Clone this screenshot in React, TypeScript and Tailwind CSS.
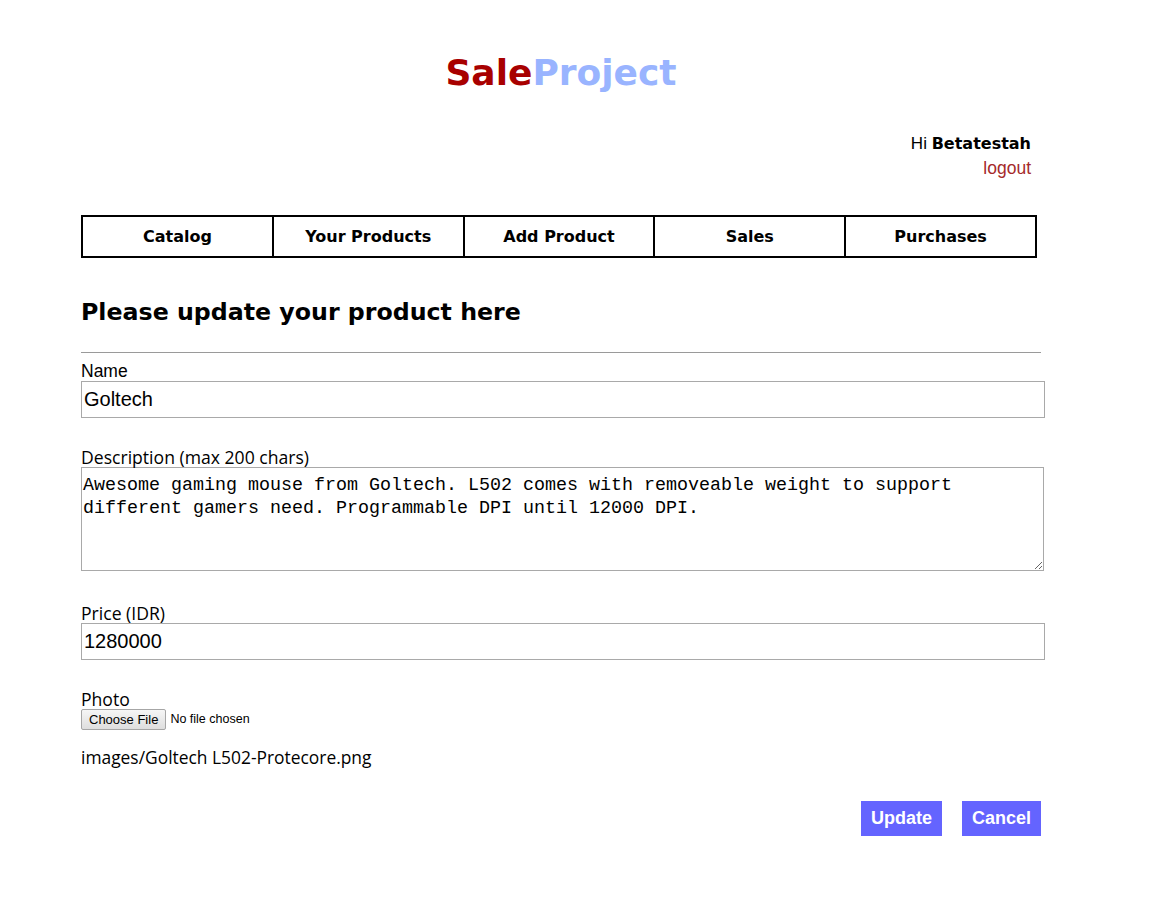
import React from 'react';

const navItems = ['Catalog', 'Your Products', 'Add Product', 'Sales', 'Purchases'];

const verdana = "font-['DejaVu_Sans',Verdana,sans-serif]";
const arial = "font-['Liberation_Sans',Arial,sans-serif]";
const segoe = "font-['Open_Sans','Segoe_UI',sans-serif]";

export default function App() {
  return (
    <div className="min-h-[897px] w-full bg-white text-black">
      <div className="ml-[81px] w-[960px]">
        {/* Title */}
        <h1 className={`${verdana} pt-[52px] text-center text-[36px] font-bold leading-[42px]`}>
          <span className="text-[#a80000]">Sale</span>
          <span className="text-[#99b4ff]">Project</span>
        </h1>

        {/* User box */}
        <div className="mt-[37px] mr-[10px] flex flex-col items-end text-[16px] leading-[24px]">
          <p>
            <span className={`${arial} text-[17px]`}>Hi </span>
            <span className={`${verdana} font-bold`}>Betatestah</span>
          </p>
          <a className={`${arial} text-[17.5px] text-[#a52a2a]`} href="#">
            logout
          </a>
        </div>

        {/* Nav */}
        <nav className="mt-[35px] flex w-[956px] border-2 border-black">
          {navItems.map((item, i) => (
            <div
              key={item}
              className={`${verdana} flex h-[39px] flex-1 items-center justify-center text-[16px] font-bold ${
                i > 0 ? 'border-l-2 border-black' : ''
              }`}
            >
              {item}
            </div>
          ))}
        </nav>

        {/* Heading */}
        <h2 className={`${verdana} mt-[37px] text-[23.7px] font-bold leading-[34px]`}>Please update your product here</h2>
        <hr className="mt-[23px] border-t border-[#9a9a9a]" />

        {/* Form */}
        <form className="mt-[9px]">
          <label className={`${arial} block text-[17.5px] leading-[19px]`}>Name</label>
          <input
            className={`${arial} block h-[37px] w-[964px] border border-[#a9a9a9] px-[2px] text-[20px] outline-none`}
            defaultValue="Goltech"
          />

          <label className={`${segoe} mt-[30px] block text-[17.6px] leading-[19px]`}>Description (max 200 chars)</label>
          <textarea
            className="block h-[104px] w-[963px] resize-y border border-[#a9a9a9] px-[1px] pt-[6px] pb-[4px] font-['Liberation_Mono','DejaVu_Sans_Mono',monospace] text-[18.33px] leading-[23px] outline-none"
            defaultValue="Awesome gaming mouse from Goltech. L502 comes with removeable weight to support different gamers need. Programmable DPI until 12000 DPI."
          />

          <label className={`${segoe} mt-[33px] block text-[17.6px] leading-[19px]`}>Price (IDR)</label>
          <input
            className={`${arial} block h-[37px] w-[964px] border border-[#a9a9a9] px-[2px] text-[20px] outline-none`}
            defaultValue="1280000"
          />

          <label className={`${segoe} mt-[30px] block text-[17.6px] leading-[19px]`}>Photo</label>
          <div className={`${arial} flex items-center text-[13px]`}>
            <span className="flex h-[21px] items-center rounded-[2px] border border-[#a6a6a6] bg-gradient-to-b from-[#f6f6f6] to-[#dedede] px-[7px] text-[13px]">
              Choose File
            </span>
            <span className="ml-[4px] text-[12.5px]">No file chosen</span>
          </div>

          <p className={`${segoe} mt-[16px] text-[17.4px] leading-[22px]`}>images/Goltech L502-Protecore.png</p>

          <div className="mt-[33px] flex justify-end gap-[20px]">
            <button
              type="button"
              className={`${arial} h-[35px] w-[81px] bg-[#6464ff] text-[18px] font-bold text-white`}
            >
              Update
            </button>
            <button
              type="button"
              className={`${arial} h-[35px] w-[79px] bg-[#6464ff] text-[18px] font-bold text-white`}
            >
              Cancel
            </button>
          </div>
        </form>
      </div>
    </div>
  );
}
